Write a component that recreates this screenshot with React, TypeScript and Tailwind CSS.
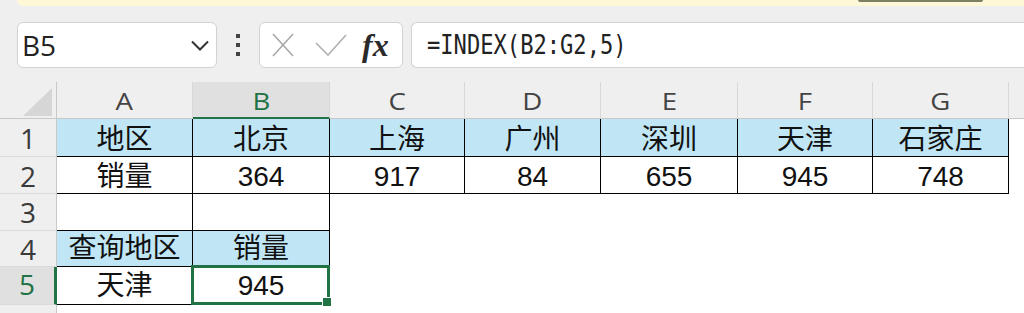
import React from "react";

type Col = { l: string; w: string };
const COLS: Col[] = [
  { l: "A", w: "w-[136px]" },
  { l: "B", w: "w-[137px]" },
  { l: "C", w: "w-[135px]" },
  { l: "D", w: "w-[136px]" },
  { l: "E", w: "w-[137px]" },
  { l: "F", w: "w-[135px]" },
  { l: "G", w: "w-[136px]" },
];

type Row = {
  n: string;
  h: string;
  numPb: string;
  cellPb: string;
  cells: (string | null)[];
  blue: boolean;
  sel?: boolean;
};

const ROWS: Row[] = [
  {
    n: "1",
    h: "h-[38px]",
    numPb: "pb-[4px]",
    cellPb: "pb-[2px]",
    cells: ["地区", "北京", "上海", "广州", "深圳", "天津", "石家庄"],
    blue: true,
  },
  {
    n: "2",
    h: "h-[37px]",
    numPb: "pb-[3px]",
    cellPb: "pb-[2px]",
    cells: ["销量", "364", "917", "84", "655", "945", "748"],
    blue: false,
  },
  {
    n: "3",
    h: "h-[37px]",
    numPb: "pb-[4px]",
    cellPb: "pb-[2px]",
    cells: ["", "", null, null, null, null, null],
    blue: false,
  },
  {
    n: "4",
    h: "h-[36px]",
    numPb: "pb-[3px]",
    cellPb: "pb-[3px]",
    cells: ["查询地区", "销量", null, null, null, null, null],
    blue: true,
  },
  {
    n: "5",
    h: "h-[38px]",
    numPb: "pb-[6px]",
    cellPb: "pb-[4px]",
    cells: ["天津", "945", null, null, null, null, null],
    blue: false,
    sel: true,
  },
];

function Selection() {
  return (
    <div className="absolute -left-[2px] -top-[2px] -right-[1px] -bottom-[1px] border-[3px] border-[#217346] z-10">
      <div className="absolute -right-[5px] -bottom-[5px] w-[10px] h-[10px] border border-white bg-[#217346]" />
    </div>
  );
}

function BodyRow({ row }: { row: Row }) {
  return (
    <div className={`${row.h} flex shrink-0`}>
      <div
        className={`w-[57px] h-full flex items-end justify-center border-b border-b-[#dadada] ${row.numPb} ${
          row.sel
            ? "bg-[#e0e0e0] text-[#217346] border-r-[3px] border-r-[#217346]"
            : "bg-[#efefef] text-[#3a3a3a] border-r border-r-[#c8c8c8]"
        }`}
      >
        <span className="text-[28px] leading-none font-['Open_Sans',sans-serif]">{row.n}</span>
      </div>
      {COLS.map((c, i) => {
        const v = row.cells[i];
        const has = v !== null;
        return (
          <div
            key={c.l}
            className={`${c.w} h-full relative flex items-end justify-center border-r border-b ${row.cellPb} ${
              has ? "border-black" : "border-transparent"
            } ${has && row.blue ? "bg-[#c0e6f5]" : "bg-white"}`}
          >
            <span className="text-[28px] leading-none text-[#111] whitespace-nowrap">{v}</span>
            {row.sel && i === 1 ? <Selection /> : null}
          </div>
        );
      })}
      <div className="flex-1 h-full bg-white" />
    </div>
  );
}

export default function App() {
  return (
    <div className="w-[1024px] h-[313px] overflow-hidden bg-[#efefef] flex flex-col font-['Liberation_Sans','Noto_Sans_CJK_SC',sans-serif]">
      {/* notification banner edge */}
      <div className="h-[6px] shrink-0 ml-[17px] bg-[#fff8d6] rounded-bl-[8px] flex justify-end pr-[41px]">
        <div className="w-[125px] h-[2px] bg-[#7d8063] rounded-b-[2px]" />
      </div>

      {/* formula bar */}
      <div className="mt-[16px] h-[46px] flex shrink-0">
        <div className="ml-[17px] w-[200px] h-full rounded-[6px] border border-[#d2d2d2] bg-white flex items-center justify-between pl-[4px] pr-[7px]">
          <span className="text-[28px] leading-none text-[#222] font-['Open_Sans',sans-serif]">B5</span>
          <svg width="18" height="11" viewBox="0 0 18 11">
            <path d="M1 1.5 L9 9.5 L17 1.5" fill="none" stroke="#333" strokeWidth="2" />
          </svg>
        </div>
        <div className="w-[42px] h-full flex flex-col items-center justify-center gap-[5px]">
          <div className="w-[4px] h-[4px] bg-[#444]" />
          <div className="w-[4px] h-[4px] bg-[#444]" />
          <div className="w-[4px] h-[4px] bg-[#444]" />
        </div>
        <div className="w-[144px] h-full rounded-[6px] border border-[#d2d2d2] bg-white flex items-center pl-[12px]">
          <svg width="22" height="24" viewBox="0 0 22 24">
            <path d="M1 1 L21 23 M21 1 L1 23" fill="none" stroke="#a8a8a8" strokeWidth="1.6" />
          </svg>
          <svg className="ml-[21px]" width="32" height="22" viewBox="0 0 32 22">
            <path d="M1 9 L13 21 L31 1" fill="none" stroke="#b0b0b0" strokeWidth="1.6" />
          </svg>
          <span className="ml-[15px] font-['Liberation_Serif',serif] italic font-bold text-[32px] leading-none text-[#2a2a2a]">
            fx
          </span>
        </div>
        <div className="ml-[8px] flex-1 h-full rounded-l-[6px] border border-r-0 border-[#d2d2d2] bg-white flex items-center pl-[15px]">
          <span className="inline-block origin-left scale-x-[0.85] font-['DejaVu_Sans_Mono',monospace] text-[26px] leading-none text-[#222] whitespace-nowrap">
            =INDEX(B2:G2,5)
          </span>
        </div>
      </div>

      {/* column headers */}
      <div className="mt-[14px] h-[37px] flex shrink-0">
        <div className="w-[57px] h-full border-r border-r-[#c8c8c8] border-b border-b-[#c8c8c8] flex items-end justify-end pr-[3px] pb-[2px]">
          <svg width="30" height="28" viewBox="0 0 30 28">
            <polygon points="29,0 29,28 0,28" fill="#d6d6d6" />
          </svg>
        </div>
        {COLS.map((c) => {
          const sel = c.l === "B";
          return (
            <div
              key={c.l}
              className={`${c.w} h-full flex items-end justify-center border-r border-r-[#d8d8d8] ${
                sel
                  ? "bg-[#e0e0e0] text-[#217346] border-b-2 border-b-[#217346] pb-[4px]"
                  : "text-[#444] border-b border-b-[#c8c8c8] pb-[5px]"
              }`}
            >
              <span className="inline-block scale-x-[1.2] text-[23px] leading-none font-['Open_Sans',sans-serif]">
                {c.l}
              </span>
            </div>
          );
        })}
        <div className="flex-1 h-full border-b border-b-[#c8c8c8]" />
      </div>

      {ROWS.map((r) => (
        <BodyRow key={r.n} row={r} />
      ))}

      <div className="flex-1 flex">
        <div className="w-[57px] h-full bg-[#efefef] border-r border-r-[#c8c8c8]" />
        <div className="flex-1 h-full bg-white" />
      </div>
    </div>
  );
}
